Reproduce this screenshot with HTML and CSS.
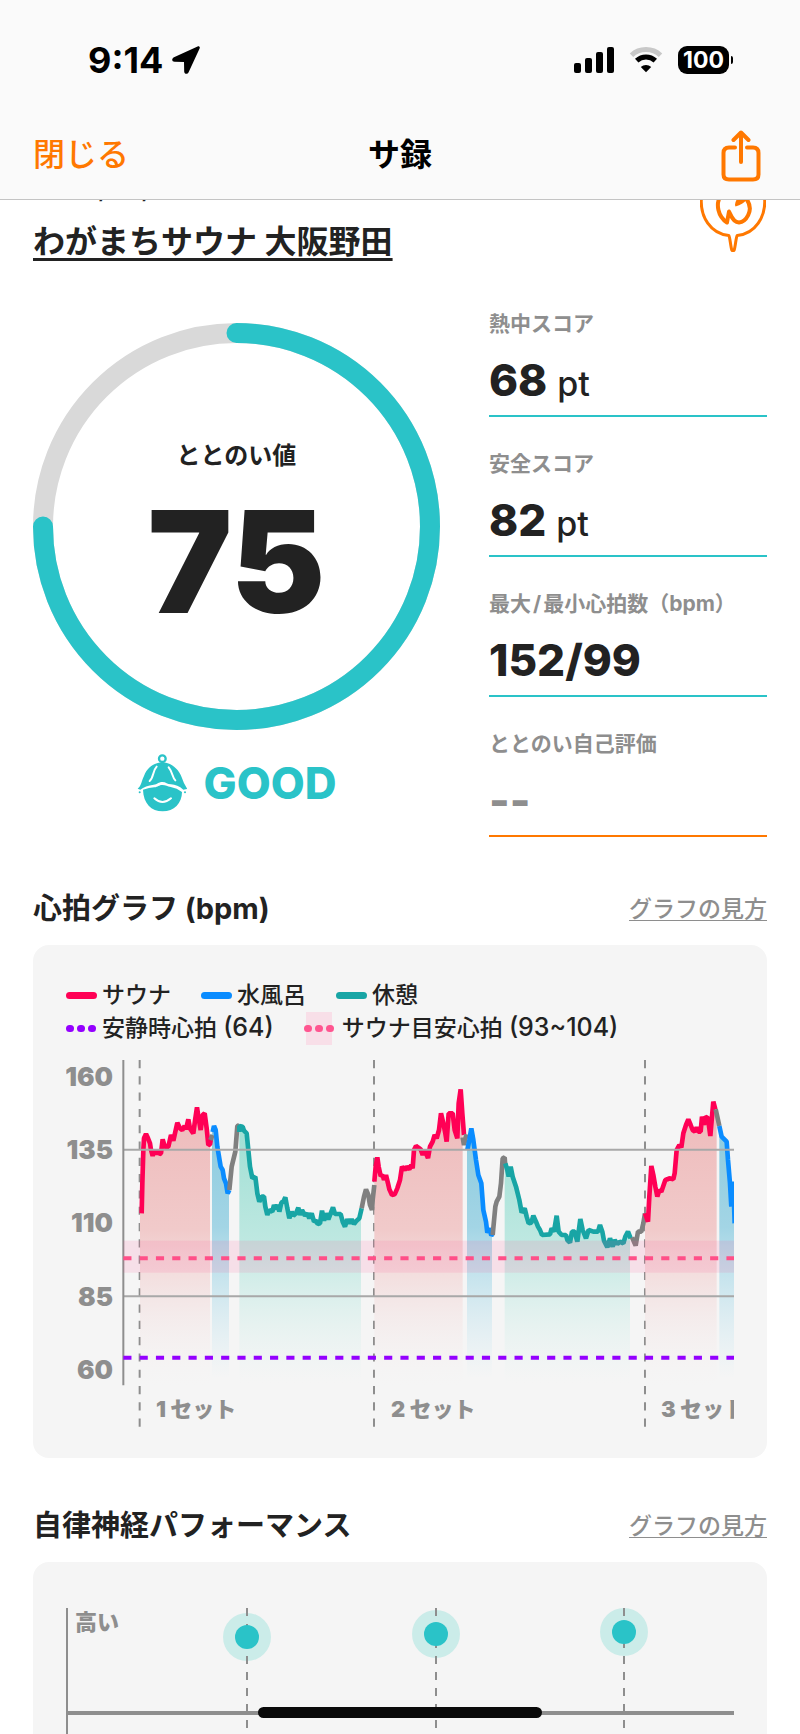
FILE: index.html
```html
<!DOCTYPE html>
<html lang="ja">
<head>
<meta charset="utf-8">
<meta name="viewport" content="width=device-width, initial-scale=1">
<title>サ録</title>
<link rel="stylesheet" href="styles.css">
</head>
<body>
<header class="header">
  <div class="status">
    <div class="status-left">
      <span class="time">9:14</span>
      <svg class="icon-location" viewBox="0 0 28 28" aria-hidden="true"><path d="M25.600 .4 2 11.200C-.7 12.600-.2 15.600 2.600 15.700L12 15.900 12.200 25.500C12.300 28.200 15.400 28.700 16.600 26.200L27.600 2.500C28.300.9 27.100-.2 25.600.4Z"/></svg>
    </div>
    <div class="status-right">
      <svg class="icon-signal" viewBox="0 0 40 26" aria-hidden="true"><rect x="0" y="16" width="7" height="10" rx="2"/><rect x="11" y="11" width="7" height="15" rx="2"/><rect x="22" y="5" width="7" height="21" rx="2"/><rect x="33" y="0" width="7" height="26" rx="2"/></svg>
      <svg class="icon-wifi" viewBox="0 0 34 26" aria-hidden="true"><path class="wifi-faint" d="M2.500 8.200C10.500.6 23.500.6 31.500 8.200"/><path class="wifi-arc" d="M7.700 13.700C13 8.800 21 8.800 26.300 13.700"/><path d="M17 25.200 11.800 19.900C14.600 17.200 19.400 17.200 22.200 19.900Z"/></svg>
      <span class="battery"><span class="battery-level">100</span></span>
    </div>
  </div>
  <nav class="nav">
    <button class="close" type="button">閉じる</button>
    <h1 class="title">サ録</h1>
    <button class="share" type="button" aria-label="共有">
      <svg class="icon-share" viewBox="0 0 40 52" aria-hidden="true"><path d="M14 17.500H8Q2.500 17.500 2.500 23V44.500Q2.500 49.500 8 49.500H32Q37.500 49.500 37.500 44.500V23Q37.500 17.500 32 17.500H26"/><path d="M20 32V3M12.500 10 20 2.500 27.500 10"/></svg>
    </button>
  </nav>
</header>

<main class="main">
  <section class="place">
    <div class="place-text">
      <div class="date"><span>/</span><span>/</span></div>
      <a class="place-name" href="#">わがまちサウナ 大阪野田</a>
    </div>
    <svg class="icon-pin" viewBox="0 0 66 52" aria-hidden="true"><path d="M1.500 -3C-.5 17 11 34 28.800 35.500C30 37 30.500 46 31.800 50Q33 51.500 34.200 50C35.500 46 36 37 37.200 35.500C55 34 66.500 17 64.500 -3"/><path class="flame" d="M20 -3C16 4 17.500 16 27 22.500L29 11.500C31 14.500 32 22 39 22.500C45 22 55 11 46.500 -1"/><path class="flame-tip" d="M37 -1H47Q44 4 35.500 6.500Q34 4 37 -1Z"/></svg>
  </section>

  <section class="scores">
    <div class="total">
      <div class="ring">
        <svg class="ring-svg" viewBox="0 0 407 407" aria-hidden="true"><circle class="ring-track" cx="203.500" cy="203.500" r="193.500"/><path class="ring-value" d="M203.500 10A193.500 193.500 0 1 1 10 203.500"/></svg>
        <div class="ring-text">
          <span class="ring-label">ととのい値</span>
          <span class="ring-number">75</span>
        </div>
      </div>
      <div class="rank">
        <svg class="icon-face" viewBox="46 42 150 174" aria-hidden="true">
          <circle class="face-loop" cx="122" cy="56" r="10"/>
          <path d="M106 70Q122 63 138 70C156 75 173 92 180 112Q186 131 197 147L185 149Q167 134 148 133C137 133 133 126 122 126C110 126 107 134 96 134C79 136 66 141 56 149L48 146C59 139 61 118 67 108C75 88 88 75 106 70Z"/>
          <path class="face-line" d="M105 80C93 92 96 113 84 123M141 82C153 96 151 111 161 121"/>
          <path d="M64 149Q83 143 98 142C109 141 112 135 122 135C132 135 137 140 147 141Q166 144 181 156C181 190 157 214 123 214C89 214 65 190 64 149Z"/>
          <circle cx="54" cy="157" r="3"/><circle cx="190" cy="157" r="3"/>
          <path class="face-line" d="M98 175Q122 197 148 175"/>
        </svg>
        <span class="rank-text">GOOD</span>
      </div>
    </div>
    <dl class="score-list">
      <div class="score"><dt class="score-label">熱中スコア</dt><dd class="score-value">68<span class="unit">pt</span></dd></div>
      <div class="score"><dt class="score-label">安全スコア</dt><dd class="score-value">82<span class="unit">pt</span></dd></div>
      <div class="score"><dt class="score-label">最大<span class="slash">/</span>最小心拍数（bpm）</dt><dd class="score-value">152/99</dd></div>
      <div class="score score-empty"><dt class="score-label">ととのい自己評価</dt><dd class="score-value">--</dd></div>
    </dl>
  </section>

  <section class="block">
    <div class="block-head">
      <h2 class="block-title">心拍グラフ (bpm)</h2>
      <a class="help" href="#">グラフの見方</a>
    </div>
    <div class="card card-heart">
      <div class="legend">
        <div class="legend-row">
          <span class="legend-item"><i class="bar bar-sauna"></i>サウナ</span>
          <span class="legend-item"><i class="bar bar-water"></i>水風呂</span>
          <span class="legend-item"><i class="bar bar-rest"></i>休憩</span>
        </div>
        <div class="legend-row">
          <span class="legend-item"><i class="dots dots-calm"><b></b><b></b><b></b></i><span>安静時心拍 <span class="range">(64)</span></span></span>
          <span class="legend-item legend-target"><i class="dots dots-target"><b></b><b></b><b></b></i><span>サウナ目安心拍 <span class="range">(93~104)</span></span></span>
        </div>
      </div>
      <svg class="chart" viewBox="0 0 668 370" role="img" aria-label="心拍グラフ">
        <defs>
          <linearGradient id="g-sauna" gradientUnits="userSpaceOnUse" x1="0" y1="150" x2="0" y2="1010"><stop offset="0" stop-color="#eebaba"/><stop offset=".45" stop-color="#f1caca"/><stop offset="1" stop-color="#f5f0f0" stop-opacity="0"/></linearGradient>
          <linearGradient id="g-water" gradientUnits="userSpaceOnUse" x1="0" y1="230" x2="0" y2="985"><stop offset="0" stop-color="#8ccbdf"/><stop offset=".4" stop-color="#a3d5e5"/><stop offset="1" stop-color="#c8e8f2" stop-opacity="0"/></linearGradient>
          <linearGradient id="g-rest" gradientUnits="userSpaceOnUse" x1="0" y1="230" x2="0" y2="1000"><stop offset="0" stop-color="#a0dfd4"/><stop offset=".45" stop-color="#bee8e1"/><stop offset="1" stop-color="#e0f2ef" stop-opacity="0"/></linearGradient>
        </defs>
        <g transform="scale(.33333) translate(-48 -30)">
          <path class="set-line" d="M269 30V1130M972 30V1130M1785 30V1130"/>
          <path fill="url(#g-sauna)" d="M270 1005V490L277 400 280 300 282 265 288 252 294 265 300 280 303 300 308 318 322 300 333 310 338 268 345 292 355 290 363 255 370 272 376 245 382 218 390 235 397 240 404 228 408 238 415 208 420 235 430 250 436 205 441 172 446 205 452 240 458 195 464 190 470 235 475 285 480 283V1005Z"/>
          <path fill="url(#g-water)" d="M486 985V240L492 228 497 240 502 290 512 350 518 360 522 385 528 400 533 430 537 420V985Z"/>
          <path fill="url(#g-rest)" d="M568 1000V228L578 230 582 242 590 250 594 290 600 350 607 385 616 380 622 430 628 455 635 440 642 440 646 470 652 495 658 480 667 485 672 465 678 478 684 465 688 485 694 458 700 455 706 442 712 475 718 505 725 485 738 490 745 473 750 495 765 497 778 505 785 490 792 515 803 522 810 520 816 482 822 512 828 490 835 508 842 490 849 472 855 492 872 492 878 515 885 530 892 508 905 508 920 512 928 505 933 475V1000Z"/>
        </g>
        <g transform="scale(.33333) translate(912 -30)">
          <path fill="url(#g-sauna)" d="M13 1005V395L17 350 22 322 26 350 32 378 38 375 42 390 48 375 54 400 58 418 66 435 74 433 82 415 90 390 96 350 104 360 118 358 124 345 128 355 132 300 138 288 152 298 158 315 164 300 174 324 180 290 188 275 194 255 200 265 207 240 213 190 220 220 230 275 236 190 248 190 254 240 262 265 266 160 272 118 278 190V1005Z"/>
          <path fill="url(#g-water)" d="M291 985V300L298 270 304 235 310 270 318 330 325 375 334 400 340 480 348 515 352 548 366 556V985Z"/>
          <path fill="url(#g-rest)" d="M404 1000V345L412 360 416 380 422 350 428 380 438 410 448 450 455 488 464 475 470 500 476 520 484 518 490 497 498 515 504 530 510 540 516 555 540 553 545 535 552 545 560 497 566 545 575 555 588 555 600 578 606 545 614 545 622 575 631 507 638 540 648 565 656 540 684 545 690 525 697 545 702 572 712 592 720 565 728 590 742 582 760 580 766 560 774 545 780 562V1000Z"/>
          <path fill="url(#g-sauna)" d="M825 1005V490L834 515 838 440 844 348 850 375 856 410 862 440 874 425 886 390 910 388 914 370 920 300 928 285 934 292 940 250 948 225 955 208 962 225 975 245 992 245 996 200 1002 225 1006 200 1014 205 1021 258 1026 200 1030 155 1036 178 1040 190V1005Z"/>
          <path fill="url(#g-water)" d="M1048 985V228L1055 260 1070 275 1074 330 1080 400 1084 470 1100 480V985Z"/>
        </g>
        <g class="series" transform="scale(.33333) translate(-48 -30)">
          <path class="s-sauna" d="M275 490 277 400 280 300 282 265 288 252 294 265 300 280 303 300 308 318 313 300 316 313 322 300 328 312 333 310 338 268 345 292 355 290 363 255 370 272 376 245 382 218 390 235 397 240 404 228 408 238 415 208 420 235 430 250 436 205 441 172 446 205 452 240 458 195 464 190 470 235 475 285 480 283 483 265"/>
          <path class="s-move" d="M481 270 488 255"/>
          <path class="s-water" d="M488 246 492 228 497 240 502 290 512 350 518 360 522 385 528 400 533 430 538 420"/>
          <path class="s-move" d="M538 420 545 350 556 305 562 228 568 225"/>
          <path class="s-rest" d="M568 246V228L578 230 582 242 590 250 594 290 600 350 607 385 616 380 622 430 628 455 635 440 642 440 646 470 652 495 658 480 667 485 672 465 678 478 684 465 688 485 694 458 700 455 706 442 712 475 718 505 725 485 730 497 738 490 745 473 750 495 756 480 765 497 772 490 778 505 785 490 792 515 798 512 803 522 810 520 816 482 822 512 828 490 835 508 842 490 849 472 855 492 872 492 878 515 885 530 892 508 898 520 905 508 912 522 920 512 928 505 935 475"/>
          <path class="s-move" d="M935 475 942 440 948 418 955 435 960 465 966 480 968 450 973 405"/>
        </g>
        <g class="series" transform="scale(.33333) translate(912 -30)">
          <path class="s-sauna" d="M13 395 17 350 22 322 26 350 32 378 38 375 42 390 48 375 54 400 58 418 66 435 74 433 82 415 90 390 96 350 104 360 110 350 118 358 124 345 128 355 132 300 138 288 144 292 152 298 158 315 164 300 174 324 180 290 188 275 194 255 200 265 207 240 213 190 220 220 226 250 230 275 236 190 248 190 254 240 262 265 266 160 272 118 277 190 282 255"/>
          <path class="s-move" d="M278 262 282 285 289 253"/>
          <path class="s-water" d="M292 300 298 270 304 235 310 270 318 330 325 375 334 400 340 480 348 515 352 548 358 535 364 556 368 552"/>
          <path class="s-move" d="M368 555 376 470 380 455 388 440 393 400 398 325 404 322 406 350"/>
          <path class="s-rest" d="M406 340 412 360 416 380 422 350 428 380 438 410 448 450 455 488 464 475 470 500 476 520 484 518 490 497 498 515 504 530 510 540 516 555 540 553 545 535 552 545 560 497 566 545 575 555 588 555 592 570 600 578 606 545 614 545 622 575 631 507 638 540 648 565 656 540 670 545 684 545 690 525 697 545 702 572 712 592 720 565 728 590 734 570 742 582 750 575 760 580 766 560 774 545 782 565"/>
          <path class="s-move" d="M786 562 797 587 804 545 814 545 820 520 825 490"/>
          <path class="s-sauna" d="M825 490 834 515 838 440 844 348 850 375 856 410 862 440 868 420 874 425 886 390 892 388 898 385 910 388 914 370 920 300 928 285 934 292 940 250 948 225 955 208 962 225 968 240 975 245 980 232 985 245 992 245 996 200 1002 225 1006 200 1014 205 1021 258 1026 200 1030 155 1036 178"/>
          <path class="s-move" d="M1037 178 1042 200 1048 228"/>
          <path class="s-water" d="M1048 228 1055 260 1070 275 1074 330 1080 400 1084 470 1090 395 1094 520"/>
        </g>
        <g transform="scale(.33333) translate(-48 -30)">
          <path class="grid" d="M220 299H2060M220 739H2060"/>
          <path class="axis-line" d="M220 30V1006"/>
          <rect class="target-band" x="220" y="572" width="1840" height="96"/>
          <path class="target-line" d="M220 625H2060"/>
          <path class="calm-line" d="M220 923H2060"/>
        </g>
        <g class="axis-y"><text x="47" y="26">160</text><text x="47" y="99">135</text><text x="47" y="172">110</text><text x="47" y="246">85</text><text x="47" y="319">60</text></g>
        <g class="axis-x"><text x="90" y="357">1 セット</text><text x="325" y="357">2 セット</text><text x="595" y="357">3 セット</text></g>
      </svg>
    </div>
  </section>

  <section class="block block-nerve">
    <div class="block-head">
      <h2 class="block-title">自律神経パフォーマンス</h2>
      <a class="help" href="#">グラフの見方</a>
    </div>
    <div class="card card-nerve">
      <svg class="chart" viewBox="0 0 668 240" role="img" aria-label="自律神経パフォーマンス">
        <g class="halo"><circle cx="181" cy="29" r="24"/><circle cx="370" cy="26" r="24"/><circle cx="558" cy="24" r="24"/></g>
        <path class="nerve-dash" d="M181 0V240M370 0V240M558 0V240"/>
        <g class="point"><circle cx="181" cy="29" r="12"/><circle cx="370" cy="26" r="12"/><circle cx="558" cy="24" r="12"/></g>
        <path class="nerve-axis" d="M1 0V240"/>
        <path class="nerve-mid" d="M0 105H668"/>
        <g class="axis-x"><text x="9" y="22">高い</text></g>
      </svg>
    </div>
  </section>
</main>
<div class="home-bar"></div>
</body>
</html>
```

FILE: styles.css
```css
* { box-sizing: border-box; margin: 0; padding: 0; }
body {
  height: 100vh;
  display: flex;
  flex-direction: column;
  overflow: hidden;
  background: #fff;
  color: #222;
  font-family: Inter, "Noto Sans CJK JP", sans-serif;
}
button { border: 0; background: none; font: inherit; color: #ff7800; cursor: pointer; }
svg { display: block; }

.header { flex: none; background: #fafafa; border-bottom: 1px solid #c4c4c4; color: #000; }
.status { display: flex; justify-content: space-between; align-items: center; height: 108px; padding: 12px 67px 0 88px; }
.status-left { display: flex; align-items: center; gap: 9px; }
.time { font-size: 36px; font-weight: 700; line-height: 40px; }
.icon-location { width: 28px; height: 28px; }
.status-right { display: flex; align-items: center; gap: 15px; }
.icon-signal { width: 40px; height: 26px; }
.icon-wifi { width: 34px; height: 26px; }
.wifi-faint, .wifi-arc { fill: none; stroke: #000; stroke-width: 5; }
.wifi-faint { stroke: #c8c8c8; }
.battery { display: flex; align-items: center; gap: 2px; }
.battery::after { content: ""; width: 2px; height: 8px; border-radius: 0 2px 2px 0; background: #000; }
.battery-level { width: 51px; height: 28px; border-radius: 9px; background: #000; color: #fff; font-size: 23px; font-weight: 700; line-height: 28px; text-align: center; }

.nav { display: grid; grid-template-columns: 1fr auto 1fr; align-items: center; height: 91px; padding: 2px 33px 0; }
.close { justify-self: start; font-size: 32px; font-weight: 500; line-height: 40px; }
.title { font-size: 32px; font-weight: 700; line-height: 40px; }
.share { justify-self: end; padding: 2px 6px 0 0; }
.icon-share { width: 40px; height: 52px; fill: none; stroke: #ff7800; stroke-width: 4; stroke-linecap: round; stroke-linejoin: round; }

.main { flex: 1; min-height: 0; overflow: hidden; padding: 0 33px; }
.place { display: flex; justify-content: space-between; align-items: flex-start; height: 110px; }
.date { display: flex; align-items: flex-end; gap: 35px; height: 3px; margin-bottom: 19px; padding-left: 66px; overflow: hidden; font-size: 22px; font-weight: 600; line-height: 24px; }
.place-name { display: block; color: #222; font-size: 32px; font-weight: 700; line-height: 40px; text-decoration: underline; text-decoration-thickness: 3px; text-underline-offset: 5px; text-decoration-skip-ink: none; }
.icon-pin { width: 66px; height: 52px; margin-right: 1px; fill: none; stroke: #ff7800; stroke-width: 3; stroke-linejoin: round; }
.flame { stroke-width: 4; }
.flame-tip { fill: #ff7800; stroke: none; }

.scores { display: grid; grid-template-columns: 407fr 278fr; gap: 49px; }
.total { padding-top: 13px; }
.ring { display: grid; }
.ring-svg, .ring-text { grid-area: 1 / 1; }
.ring-svg { width: 100%; height: auto; fill: none; stroke-width: 20; }
.ring-track { stroke: #d9d9d9; }
.ring-value { stroke: #2ac3c8; stroke-linecap: round; }
.ring-text { display: flex; flex-direction: column; align-items: center; padding-top: 115px; }
.ring-label { font-size: 24px; font-weight: 700; line-height: 36px; }
.ring-number { margin-top: 17px; font-size: 142px; font-weight: 900; line-height: 140px; }
.rank { display: flex; justify-content: center; align-items: center; gap: 17px; margin-top: 24px; color: #2ac3c8; }
.icon-face { width: 50px; height: 58px; fill: #2ac3c8; }
.face-loop { fill: none; stroke: #2ac3c8; stroke-width: 7; }
.face-line { fill: none; stroke: #fff; stroke-width: 6; stroke-linecap: round; }
.rank-text { font-size: 44px; font-weight: 800; line-height: 58px; }

.score-list { display: flex; flex-direction: column; gap: 33px; }
.score { padding-bottom: 7px; border-bottom: 2px solid #2ac3c8; }
.score-label { color: #8e8e8e; font-size: 21px; font-weight: 700; line-height: 28px; white-space: nowrap; }
.slash { padding: 0 2px; }
.score-value { margin-top: 15px; font-size: 44px; font-weight: 800; line-height: 55px; }
.unit { margin-left: 10px; font-size: 34px; font-weight: 500; line-height: 34px; }
.score-empty { border-color: #ff7800; }
.score-empty .score-value { color: #8e8e8e; }

.block { padding-top: 52px; }
.block-nerve { padding-top: 48px; }
.block-head { display: flex; justify-content: space-between; align-items: center; margin-bottom: 16px; }
.block-title { font-size: 29px; font-weight: 700; line-height: 40px; }
.help { color: #8e8e8e; font-size: 23px; font-weight: 500; line-height: 40px; text-decoration: underline; text-decoration-thickness: 1px; text-underline-offset: 3px; text-decoration-skip-ink: none; }
.card { border-radius: 16px; background: #f5f5f5; }
.card-heart { padding: 34px 33px 28px; }
.card-nerve { padding: 46px 33px 0; }

.legend { margin-bottom: 15px; font-size: 23px; font-weight: 500; line-height: 33px; }
.legend-row { display: flex; gap: 30px; }
.legend-item { display: flex; align-items: center; gap: 5px; }
.legend-target { gap: 8px; }
.range { font-size: 25px; line-height: 25px; }
.bar { width: 31px; height: 7px; border-radius: 4px; }
.bar-sauna { background: #ff0055; }
.bar-water { background: #0a8cff; }
.bar-rest { background: #18a5a5; }
.dots { display: flex; align-items: center; justify-content: space-between; width: 30px; height: 33px; }
.dots b { width: 8px; height: 7px; border-radius: 4px; background: #9400ff; }
.dots-target { background: linear-gradient(#f8dfe8, #f8dfe8) center / 26px 33px no-repeat; }
.dots-target b { background: #ff5590; }
.legend-row:last-child .legend-item:first-child { gap: 6px; }

.chart { width: 100%; height: auto; overflow: hidden; }
.set-line { fill: none; stroke: #8e8e8e; stroke-width: 6; stroke-dasharray: 24.4 24.5; }
.series { fill: none; stroke-width: 14; stroke-linejoin: bevel; }
.s-sauna { stroke: #ff0055; }
.s-water { stroke: #0a8cff; }
.s-rest { stroke: #18a5a5; }
.s-move { stroke: #808080; }
.grid { fill: none; stroke: #a8a8a8; stroke-width: 6; }
.axis-line { stroke: #8e8e8e; stroke-width: 6; }
.target-band { fill: #ff4f90; fill-opacity: .13; }
.target-line { stroke: #ff4f88; stroke-width: 12; stroke-dasharray: 24.4 24.5; }
.calm-line { stroke: #9400ff; stroke-width: 12; stroke-dasharray: 24.4 24.5; }
.axis-y { fill: #8e8e8e; font-size: 26px; font-weight: 900; text-anchor: end; }
.axis-x { fill: #8e8e8e; font-size: 22px; font-weight: 900; }
.nerve-dash { stroke: #8e8e8e; stroke-width: 2; stroke-dasharray: 8; }
.nerve-axis { stroke: #8e8e8e; stroke-width: 2; }
.nerve-mid { stroke: #8e8e8e; stroke-width: 4; }
.halo { fill: #cbece9; }
.point { fill: #2ac3c8; }

.home-bar { position: fixed; bottom: 16px; left: 50%; width: 284px; height: 11px; margin-left: -142px; border-radius: 6px; background: #0a0a0a; }
```
